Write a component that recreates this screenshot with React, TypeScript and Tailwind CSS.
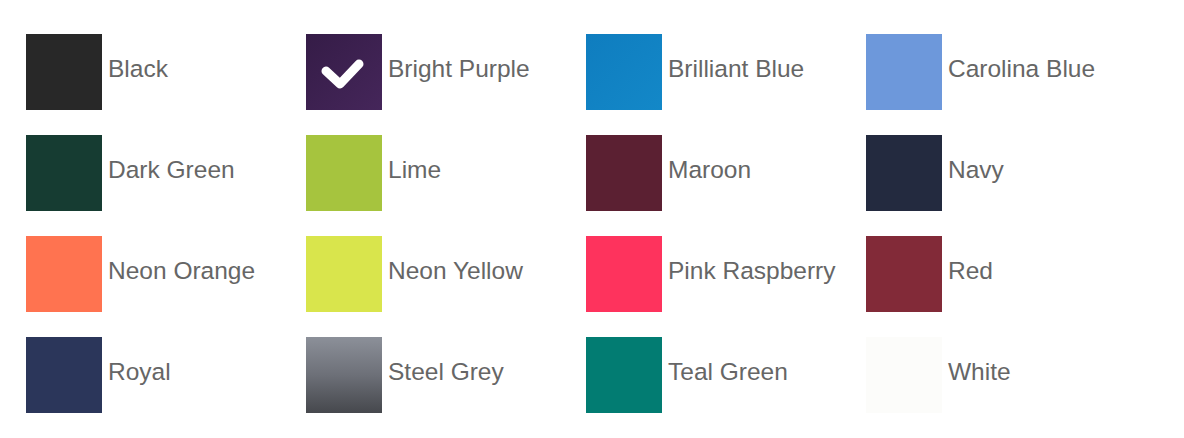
const colors = [
  { name: 'Black', bg: 'bg-[#282828]' },
  { name: 'Bright Purple', bg: 'bg-gradient-to-br from-[#351c47] to-[#45265a]', selected: true },
  { name: 'Brilliant Blue', bg: 'bg-gradient-to-br from-[#0f7dbf] to-[#1388c8]' },
  { name: 'Carolina Blue', bg: 'bg-[#6d98db]' },
  { name: 'Dark Green', bg: 'bg-[#163c32]' },
  { name: 'Lime', bg: 'bg-[#a6c43e]' },
  { name: 'Maroon', bg: 'bg-[#5b2032]' },
  { name: 'Navy', bg: 'bg-[#232a3f]' },
  { name: 'Neon Orange', bg: 'bg-[#ff7350]' },
  { name: 'Neon Yellow', bg: 'bg-[#d9e54c]' },
  { name: 'Pink Raspberry', bg: 'bg-[#fe335d]' },
  { name: 'Red', bg: 'bg-[#822a38]' },
  { name: 'Royal', bg: 'bg-[#2b365a]' },
  { name: 'Steel Grey', bg: 'bg-gradient-to-b from-[#8c9099] via-[#6d7078] to-[#46484d]' },
  { name: 'Teal Green', bg: 'bg-[#027c72]' },
  { name: 'White', bg: 'bg-[#fcfcfa]' },
];

export default function App() {
  return (
    <div
      className="w-[1184px] h-[438px] bg-white pt-[34px] pl-[26px]"
      style={{ fontFamily: '"Liberation Sans", Arial, sans-serif' }}
    >
      <div className="grid grid-cols-[280px_280px_280px_280px] gap-y-[25px]">
        {colors.map((c) => (
          <div key={c.name} className="flex items-center">
            <div className={`relative w-[76px] h-[76px] shrink-0 ${c.bg}`}>
              {c.selected && (
                <svg className="absolute inset-0 blur-[0.6px]" width="76" height="76" viewBox="0 0 76 76">
                  <path
                    d="M20 37 L34 50 L53 30"
                    fill="none"
                    stroke="white"
                    strokeWidth="9"
                    strokeLinecap="round"
                    strokeLinejoin="round"
                  />
                </svg>
              )}
            </div>
            <span className="ml-[6px] pb-[5px] text-[24.5px] leading-none text-[#666666]">{c.name}</span>
          </div>
        ))}
      </div>
    </div>
  );
}
